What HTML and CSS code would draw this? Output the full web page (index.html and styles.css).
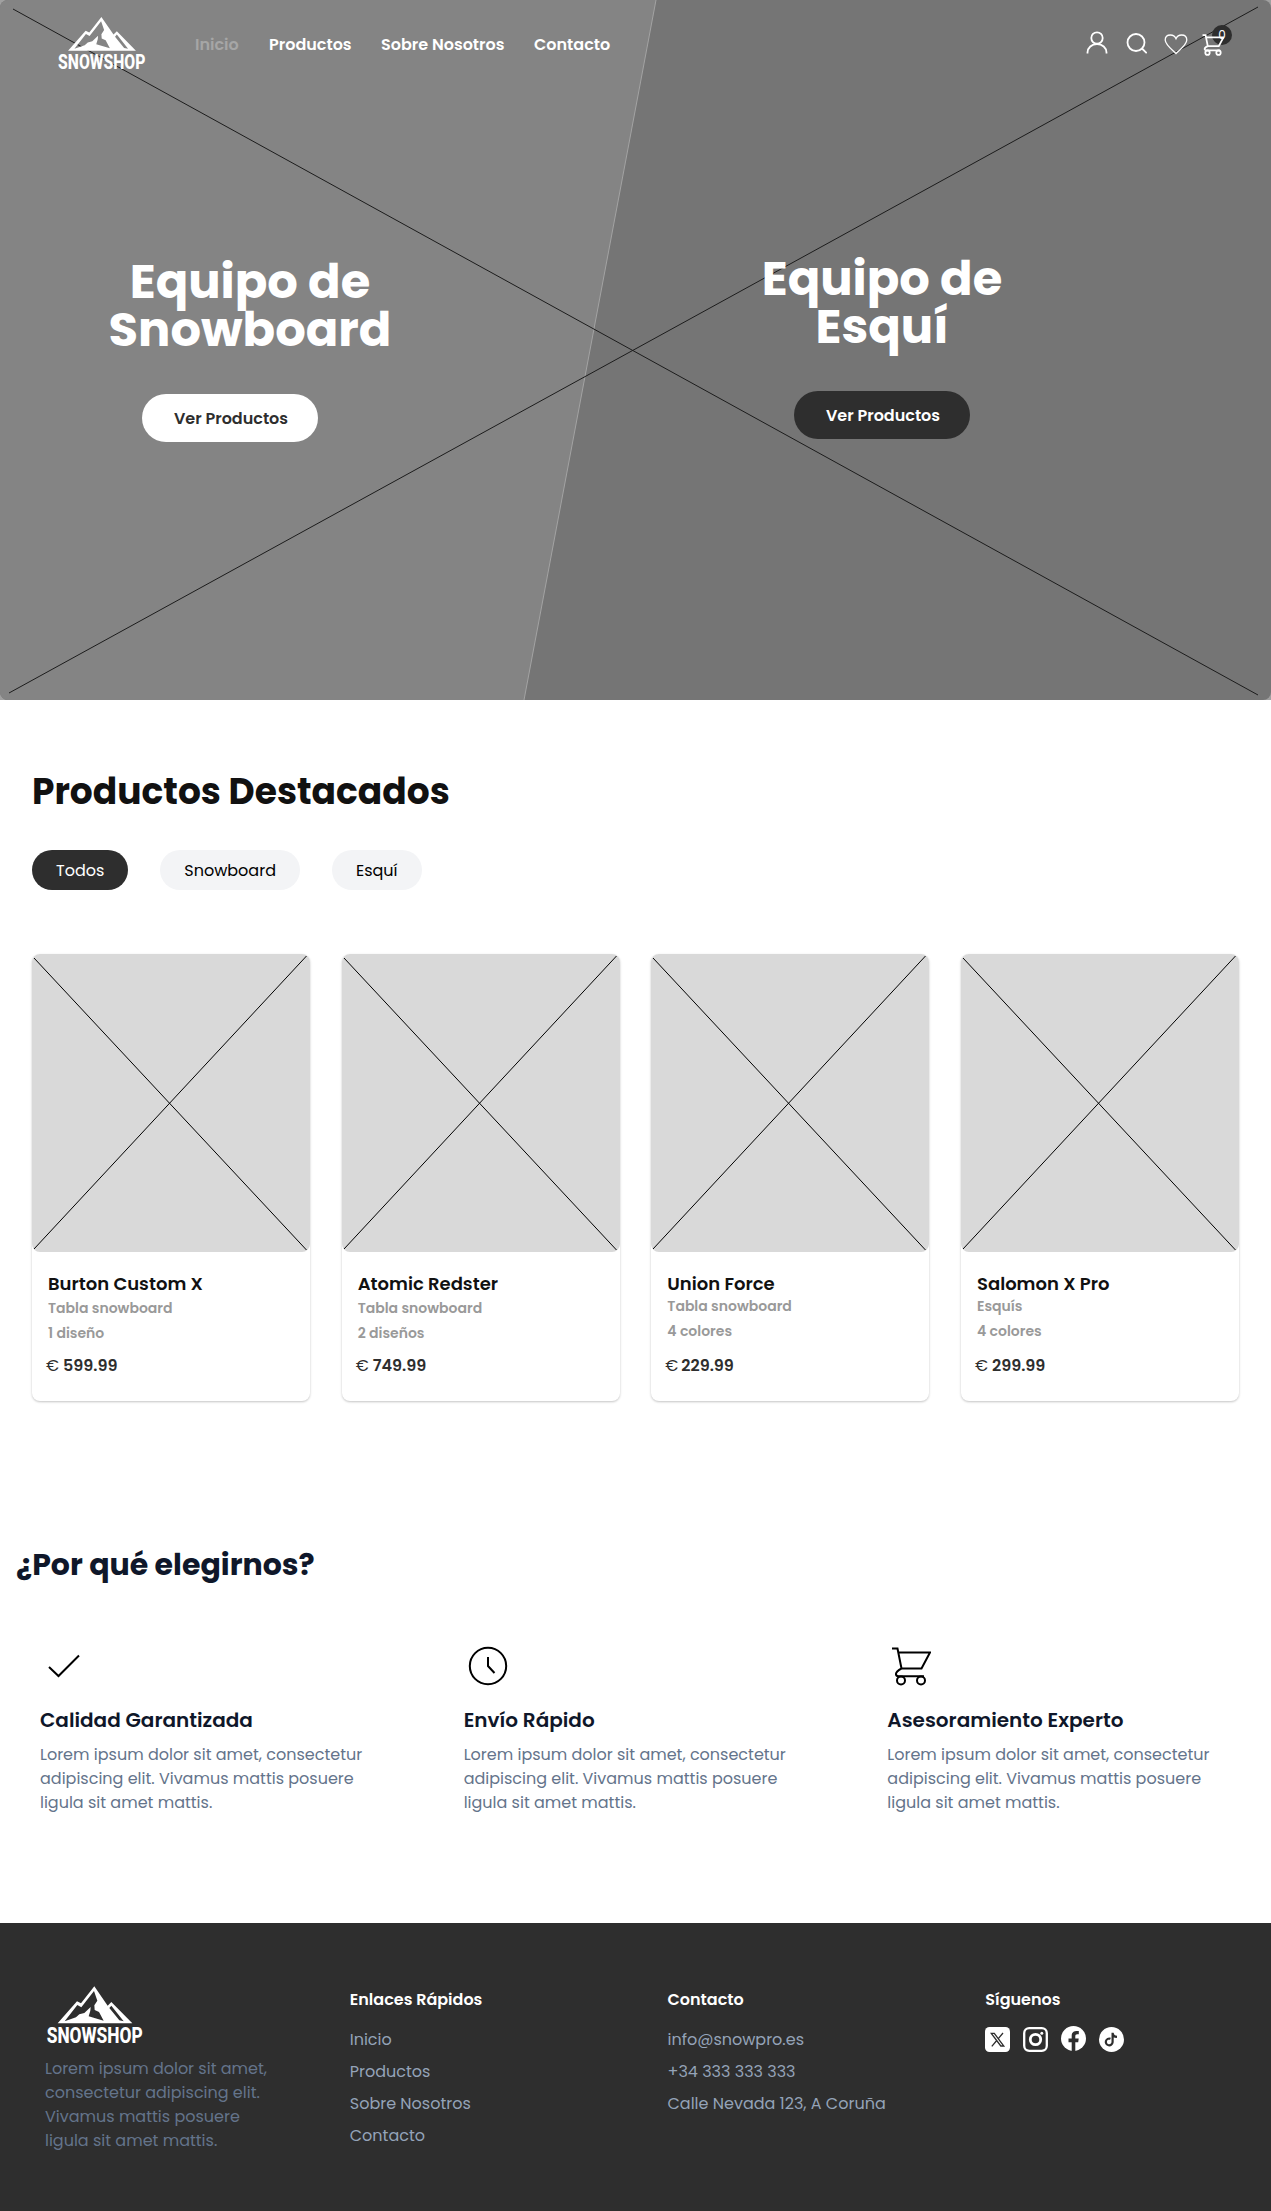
FILE: index.html
```html
<!DOCTYPE html>
<html lang="es">
<head>
<meta charset="utf-8">
<title>Snowshop</title>
<link rel="stylesheet" href="styles.css">
</head>
<body>
<svg class="sprite" aria-hidden="true">
  <symbol id="logo" viewBox="0 0 330 216">
    <path fill="#fff" fill-rule="evenodd" d="M53 130L111 64L123 70L163 19L203 77L214 66L277 130ZM162 33L172 62L163 76L164 90L177 96L191 122L146 109L151 92L152 81L133 99L118 103L108 112L74 124L112 75L124 82ZM214 77L208 84L238 121L251 124Z"/>
    <text x="20" y="189" fill="#fff" font-family="Roboto, sans-serif" font-weight="800" font-size="66" textLength="288" lengthAdjust="spacingAndGlyphs">SNOWSHOP</text>
  </symbol>
  <symbol id="cart" viewBox="0 0 40 39">
    <path d="M1 1.500H6.500L10.500 21.500H30.500L39 5.500H7.500M10.500 21.500C7 23 4.500 26 5 27.500C5.300 29 6 29.300 8 29.300H33"/>
    <circle cx="10" cy="33.500" r="4"/><circle cx="30" cy="33.500" r="4"/>
  </symbol>
</svg>

<section class="hero">
  <svg class="hero-art" viewBox="0 0 1271 700" preserveAspectRatio="none">
    <path fill="#848484" d="M0 0H656L524 700H0Z"/>
    <path stroke="#a3a3a3" d="M656 0L524 700"/>
    <path stroke="#1c1c1c" d="M13 9L1258 695M9 693L1258 7"/>
  </svg>
  <header class="topbar">
    <svg class="brand"><use href="#logo"/></svg>
    <nav class="nav">
      <a class="active">Inicio</a><a>Productos</a><a>Sobre Nosotros</a><a>Contacto</a>
    </nav>
    <div class="actions">
      <svg width="22" height="24" viewBox="0 0 22 24"><circle cx="11" cy="7" r="5.700"/><path d="M1.500 22.500V21.500A9.500 8.500 0 0 1 20.500 21.500V22.500"/></svg>
      <svg width="22" height="24" viewBox="-1 0 22 24"><circle cx="10" cy="11.500" r="8.500"/><path d="M16 17.500L20.700 22.200"/></svg>
      <svg class="thin" width="24" height="24" viewBox="0 0 24 24"><path d="M12 22.500C8 18.800 1.200 13.500 1.200 9C1.200 5.500 3.800 4 6.500 4C9 4 11 5.500 12 7.700C13 5.500 15 4 17.500 4C20.200 4 22.800 5.500 22.800 9C22.800 13.500 16 18.800 12 22.500Z"/></svg>
      <span class="bag">
        <span class="badge">0</span>
        <svg class="bag-icon" width="22" height="22"><use href="#cart"/></svg>
      </span>
    </div>
  </header>
  <div class="hero-body">
    <div class="pitch">
      <h1>Equipo de<br>Snowboard</h1>
      <a class="cta light">Ver Productos</a>
    </div>
    <div class="pitch right">
      <h1>Equipo de<br>Esquí</h1>
      <a class="cta dark">Ver Productos</a>
    </div>
  </div>
</section>

<section class="featured">
  <h2>Productos Destacados</h2>
  <div class="chips"><a class="chip on">Todos</a><a class="chip">Snowboard</a><a class="chip">Esquí</a></div>
  <div class="cards">
    <article class="card">
      <svg class="photo" viewBox="0 0 278 298"><path d="M2 4L274.500 296M2 295L274.500 2"/></svg>
      <h3>Burton Custom X</h3><p>Tabla snowboard</p><p>1 diseño</p>
      <div class="price"><span>€</span><b>599.99</b></div>
    </article>
    <article class="card">
      <svg class="photo" viewBox="0 0 278 298"><path d="M2 4L274.500 296M2 295L274.500 2"/></svg>
      <h3>Atomic Redster</h3><p>Tabla snowboard</p><p>2 diseños</p>
      <div class="price"><span>€</span><b>749.99</b></div>
    </article>
    <article class="card raised">
      <svg class="photo" viewBox="0 0 278 298"><path d="M2 4L274.500 296M2 295L274.500 2"/></svg>
      <h3>Union Force</h3><p>Tabla snowboard</p><p>4 colores</p>
      <div class="price tight"><span>€</span><b>229.99</b></div>
    </article>
    <article class="card raised">
      <svg class="photo" viewBox="0 0 278 298"><path d="M2 4L274.500 296M2 295L274.500 2"/></svg>
      <h3>Salomon X Pro</h3><p>Esquís</p><p>4 colores</p>
      <div class="price"><span>€</span><b>299.99</b></div>
    </article>
  </div>
</section>

<section class="why">
  <h2>¿Por qué elegirnos?</h2>
  <div class="reasons">
    <div>
      <svg width="48" height="48"><path d="M9 25L18.500 34L39 13.500"/></svg>
      <h3>Calidad Garantizada</h3>
      <p>Lorem ipsum dolor sit amet, consectetur<br>adipiscing elit. Vivamus mattis posuere<br>ligula sit amet mattis.</p>
    </div>
    <div>
      <svg width="48" height="48"><circle cx="24" cy="24" r="18.200"/><path d="M24 15V24L30.500 31"/></svg>
      <h3>Envío Rápido</h3>
      <p>Lorem ipsum dolor sit amet, consectetur<br>adipiscing elit. Vivamus mattis posuere<br>ligula sit amet mattis.</p>
    </div>
    <div>
      <svg width="48" height="48"><use href="#cart" x="4" y="5" width="40" height="39"/></svg>
      <h3>Asesoramiento Experto</h3>
      <p>Lorem ipsum dolor sit amet, consectetur<br>adipiscing elit. Vivamus mattis posuere<br>ligula sit amet mattis.</p>
    </div>
  </div>
</section>

<footer class="footer">
  <div class="about">
    <svg class="brand"><use href="#logo"/></svg>
    <p>Lorem ipsum dolor sit amet,<br>consectetur adipiscing elit.<br>Vivamus mattis posuere<br>ligula sit amet mattis.</p>
  </div>
  <div class="col">
    <h4>Enlaces Rápidos</h4>
    <a>Inicio</a><a>Productos</a><a>Sobre Nosotros</a><a>Contacto</a>
  </div>
  <div class="col">
    <h4>Contacto</h4>
    <a>info@snowpro.es</a><a>+34 333 333 333</a><a>Calle Nevada 123, A Coruña</a>
  </div>
  <div class="col">
    <h4>Síguenos</h4>
    <div class="social">
      <svg width="25" height="25" viewBox="0 0 25 25"><rect width="25" height="25" rx="4.500" fill="#fff"/><path fill="none" stroke="#2e2e2e" stroke-width="1.300" d="M6.300 6.300H9.300L18.800 19H15.800ZM18 6L13.500 11.300M11.300 14L6.800 19.300"/></svg>
      <svg width="25" height="25" viewBox="0 0 25 25" fill="none" stroke="#fff"><rect x="1.200" y="1.200" width="22.600" height="22.600" rx="5" stroke-width="2.300"/><circle cx="12.500" cy="12.500" r="5.200" stroke-width="2.800"/><circle cx="18.800" cy="6.200" r="1.500" fill="#fff" stroke="none"/></svg>
      <svg class="up" width="25" height="25" viewBox="0 0 25 25"><circle cx="12.500" cy="12.500" r="12.500" fill="#fff"/><path fill="#2e2e2e" d="M10.700 25V16.200H7.500V12.600H10.700V9.800C10.700 6.600 12.600 4.900 15.400 4.900C16.700 4.900 17.800 5.100 17.800 5.100V8.200H16.300C14.800 8.200 14.300 9.100 14.300 10.100V12.600H17.700L17.200 16.200H14.300V25Z"/></svg>
      <svg width="25" height="25" viewBox="0 0 25 25"><circle cx="12.500" cy="12.500" r="12.500" fill="#fff"/><path fill="none" stroke="#2e2e2e" stroke-width="2.200" d="M11.500 11.800A3.400 3.400 0 1 0 13.600 15.200V5.800C13.800 8.300 15.500 9.800 18 9.900"/></svg>
    </div>
  </div>
</footer>
</body>
</html>
```
FILE: styles.css
```css
* { box-sizing: border-box; }
body {
  margin: 0;
  background: #fff;
  font: 400 16px/24px Poppins, Inter, sans-serif;
  color: #111;
}
h1, h2, h3, h4, p { margin: 0; }
svg { display: block; flex: none; }
.sprite { position: absolute; width: 0; height: 0; }

/* Hero */
.hero { position: relative; height: 700px; background: #a0a0a0; }
.hero-art {
  position: absolute;
  inset: 0;
  width: 100%;
  height: 100%;
  border-radius: 8px;
  background: #757575;
}
.topbar {
  position: relative;
  display: flex;
  align-items: center;
  height: 88px;
  padding: 0 39px 0 52px;
}
.topbar .brand { width: 100px; height: 66px; }
.nav {
  display: grid;
  grid-template-columns: 74px 112px 153px auto;
  margin: 2px 0 0 43px;
  color: #fff;
  font-weight: 600;
}
.nav .active { color: #a6a6a6; }
.actions {
  display: flex;
  align-items: center;
  gap: 17px;
  margin: -3px 0 0 auto;
  fill: none;
  stroke: #fff;
  stroke-width: 1.8;
}
.actions .thin { stroke-width: 1.3; }
.bag { position: relative; width: 30px; height: 30px; margin-left: -3px; }
.bag-icon { position: absolute; left: 0; top: 6px; stroke-width: 3.2; }
.badge {
  position: absolute;
  left: 10px;
  top: -3px;
  width: 20px;
  height: 20px;
  border-radius: 50%;
  background: #2e2e2e;
  color: #fff;
  font-size: 12px;
  line-height: 20px;
  text-align: center;
}
.hero-body {
  position: relative;
  display: flex;
  align-items: flex-start;
  gap: 332px;
  padding: 170px 0 0 100px;
}
.pitch { display: flex; flex-direction: column; align-items: center; width: 300px; color: #fff; }
.pitch.right { margin-top: -3px; }
.pitch h1 { font-size: 48px; font-weight: 700; line-height: 48px; text-align: center; }
.cta {
  width: 176px;
  height: 48px;
  margin-top: 40px;
  padding: 1px 0 0 2px;
  border-radius: 24px;
  font-weight: 600;
  line-height: 48px;
  text-align: center;
}
.cta.light { margin-right: 40px; background: #fff; color: #2e2e2e; }
.cta.dark { background: #2e2e2e; }

/* Featured products */
.featured { padding: 72px 32px 0; }
.featured h2 { font-size: 36px; font-weight: 700; line-height: 40px; }
.chips { display: flex; gap: 32px; margin-top: 38px; }
.chip { padding: 9px 24px 7px; border-radius: 20px; background: #f3f4f6; color: #000; }
.chip.on { background: #2e2e2e; color: #fff; }
.cards { display: grid; grid-template-columns: repeat(4, 278px); justify-content: space-between; margin-top: 64px; }
.card {
  height: 447px;
  border-radius: 8px;
  box-shadow: 0 1px 3px rgba(0, 0, 0, .12), 0 1px 2px rgba(0, 0, 0, .12);
  color: #999;
  font-size: 14px;
  font-weight: 600;
  line-height: 25px;
}
.photo { width: 278px; height: 298px; margin-bottom: 20px; border-radius: 8px; background: #d9d9d9; stroke: #000; }
.card h3 { margin-left: 16px; color: #111; font-size: 18px; font-weight: 600; line-height: 24px; }
.card p { margin-left: 16px; }
.raised h3 { margin-bottom: -2px; }
.price { display: flex; gap: 5px; margin: 8px 0 0 14px; color: #2e2e2e; font-size: 16px; line-height: 24px; }
.price span { width: 12px; font-weight: 400; }
.price b { font-weight: 600; }
.raised .price { margin-top: 10px; }
.price.tight { gap: 4px; }

/* Reasons */
.why { padding-top: 146px; color: #0f172a; }
.why h2 { margin-left: 16px; font-size: 30px; font-weight: 700; line-height: 36px; }
.reasons { display: grid; grid-template-columns: repeat(3, 1fr); padding-left: 40px; margin: 59px -40px 0 0; }
.reasons svg { fill: none; stroke: #000; stroke-width: 2; }
.reasons h3 { margin-top: 16px; font-size: 20px; font-weight: 600; line-height: 28px; }
.reasons p { margin-top: 9px; color: #64748b; }

/* Footer */
.footer {
  display: grid;
  grid-template-columns: repeat(4, 317.75px);
  height: 288px;
  margin-top: 108px;
  padding: 64px 0 0 32px;
  overflow: hidden;
  background: #2e2e2e;
}
.about .brand { width: 110px; height: 72px; margin: -7px 0 5px 8px; }
.about p { margin-left: 13px; color: #64748b; }
.col { display: flex; flex-direction: column; gap: 8px; padding-top: 1px; color: #94a3b8; }
.col h4 { margin-bottom: 8px; color: #fff; font-weight: 600; }
.social { display: flex; gap: 13px; margin-top: -1px; }
.social .up { margin-top: -1px; }
```
